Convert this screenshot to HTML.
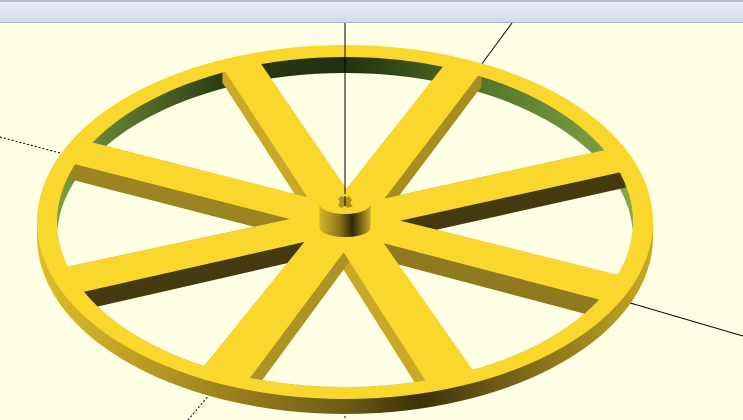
<!DOCTYPE html>
<html><head><meta charset="utf-8"><style>
html,body{margin:0;padding:0;width:743px;height:420px;overflow:hidden;background:#ffffe5}
svg{display:block}
</style></head><body>
<svg id="s" width="743" height="420" viewBox="0 0 743 420" xmlns="http://www.w3.org/2000/svg">
<defs>
<linearGradient id="bar" x1="0" y1="0" x2="0" y2="1"><stop offset="0" stop-color="#eef0f6"/><stop offset="1" stop-color="#d3d9ec"/></linearGradient>
<linearGradient id="rimside" x1="0" y1="0" x2="1" y2="0">
<stop offset="0" stop-color="#e0bf28"/><stop offset="0.25" stop-color="#a88d20"/><stop offset="0.5" stop-color="#6e5c16"/><stop offset="0.62" stop-color="#3c300c"/><stop offset="0.75" stop-color="#6e5c16"/><stop offset="1" stop-color="#c8aa24"/></linearGradient>
<linearGradient id="wall" x1="0" y1="0" x2="1" y2="0">
<stop offset="0" stop-color="#7a9e40"/><stop offset="0.3" stop-color="#2a3814"/><stop offset="0.5" stop-color="#22300f"/><stop offset="0.75" stop-color="#55772c"/><stop offset="1" stop-color="#86a848"/></linearGradient>
<linearGradient id="hub" x1="0" y1="0" x2="1" y2="0">
<stop offset="0" stop-color="#d4b52a"/><stop offset="0.4" stop-color="#8a7418"/><stop offset="0.65" stop-color="#2e260a"/><stop offset="1" stop-color="#c9aa26"/></linearGradient>
<clipPath id="inner"><ellipse cx="345" cy="222" rx="288" ry="165"/></clipPath>
</defs>
<rect x="0" y="0" width="743" height="23" fill="url(#bar)"/>
<line x1="0" y1="1" x2="743" y2="1" stroke="#8a8e98" stroke-width="1"/>
<line x1="0" y1="22.5" x2="743" y2="22.5" stroke="#a8b0c8" stroke-width="1"/>
<line x1="0" y1="137" x2="60" y2="153" stroke="#000" stroke-width="1" stroke-dasharray="2,2"/>
<line x1="345" y1="240" x2="345" y2="420" stroke="#000" stroke-width="1" stroke-dasharray="2,2"/>
<line x1="215" y1="388" x2="188" y2="420" stroke="#000" stroke-width="1" stroke-dasharray="2,2"/>
<line x1="512" y1="23" x2="470" y2="80" stroke="#000" stroke-width="1"/>
<line x1="620" y1="300" x2="743" y2="336" stroke="#000" stroke-width="1"/>
<ellipse cx="345" cy="237" rx="308" ry="177" fill="url(#rimside)"/>
<rect x="37" y="222" width="616" height="15" fill="url(#rimside)"/>
<ellipse cx="345" cy="222" rx="308" ry="177" fill="#f9d72c"/>
<ellipse cx="345" cy="222" rx="288" ry="165" fill="url(#wall)"/>
<ellipse cx="345" cy="238" rx="288" ry="165" fill="#ffffe5" clip-path="url(#inner)"/>
<g id="sides" clip-path="url(#inner)"></g><g id="tops"></g>
<line x1="345" y1="23" x2="345" y2="200" stroke="#000" stroke-width="1"/>
<ellipse cx="345" cy="228" rx="25.5" ry="9" fill="url(#hub)"/>
<rect x="319.5" y="204" width="51" height="24" fill="url(#hub)"/>
<ellipse cx="345" cy="204" rx="25.5" ry="10" fill="#f9d72c"/>
<polygon points="338,199 342,196 345,198 349,196 352,200 350,203 353,206 348,208 345,206 341,208 338,205 340,202" fill="#b09222"/>
<line x1="345" y1="196" x2="345" y2="206" stroke="#000" stroke-width="1"/>
</svg>
<script>
(function(){
var ns="http://www.w3.org/2000/svg";
var sides=document.getElementById('sides'),tops=document.getElementById('tops');
var cx=345,cy=220,sx=300,sy=172,h=17,r0=0.05,r1=0.975;
var angs=[-111,-66,-21,24,69,114,159,204];
var cols={"-111":"#caa927","-66":"#a88e22","-21":"#44390f","24":"#8f7a20","69":"#c8a826","114":"#ad9324","159":"#45390f","204":"#9b8422"};
function P(x,y,dz){var k=1+0.12*y;return [cx+sx*x, cy+sy*y+(dz||0)*k];}
function poly(par,pts,fill){var p=document.createElementNS(ns,'polygon');p.setAttribute('points',pts.map(function(q){return q[0].toFixed(1)+','+q[1].toFixed(1)}).join(' '));p.setAttribute('fill',fill);par.appendChild(p);}
function hull(pts){pts=pts.slice().sort(function(a,b){return a[0]-b[0]||a[1]-b[1]});
function cr(o,a,b){return (a[0]-o[0])*(b[1]-o[1])-(a[1]-o[1])*(b[0]-o[0]);}
var lo=[],up=[];pts.forEach(function(p){while(lo.length>=2&&cr(lo[lo.length-2],lo[lo.length-1],p)<=0)lo.pop();lo.push(p);});
for(var i=pts.length-1;i>=0;i--){var p=pts[i];while(up.length>=2&&cr(up[up.length-2],up[up.length-1],p)<=0)up.pop();up.push(p);}
up.pop();lo.pop();return lo.concat(up);}
angs.forEach(function(a){var t=a*Math.PI/180,c=Math.cos(t),s=Math.sin(t),nx=-s,ny=c;
var w0=0.07,w1=0.074*(1+0.15*s);
var q=[[r0*c+w0*nx,r0*s+w0*ny],[r1*c+w1*nx,r1*s+w1*ny],[r1*c-w1*nx,r1*s-w1*ny],[r0*c-w0*nx,r0*s-w0*ny]];
var top=q.map(function(p){return P(p[0],p[1]);});
var bot=q.map(function(p){return P(p[0],p[1],h);});
poly(sides,hull(top.concat(bot)),cols[String(a)]);
poly(tops,top,"#f9d72c");});
})();
</script>
</body></html>
